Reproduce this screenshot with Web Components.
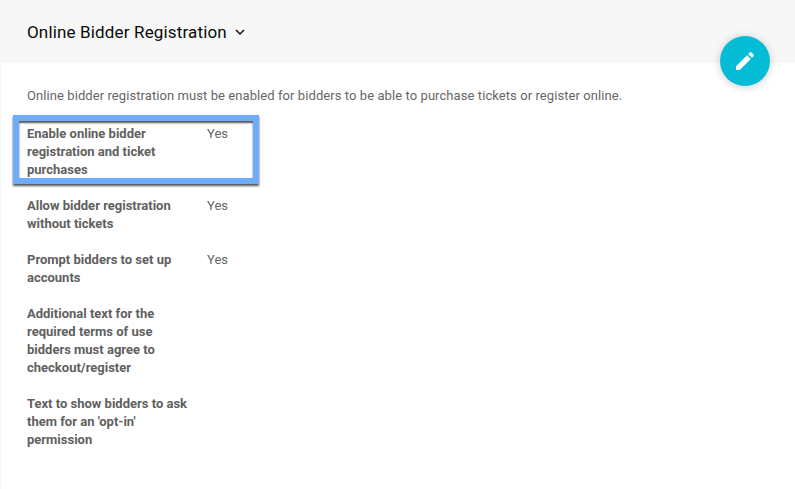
<!DOCTYPE html>
<html lang="en"><head><meta charset="utf-8"><title>Online Bidder Registration</title>
<style>body{margin:0;background:#fff;font-family:Roboto,sans-serif}</style></head><body>
<settings-card heading="Online Bidder Registration">
<edit-button slot="action"></edit-button>
<span slot="intro">Online bidder registration must be enabled for bidders to be able to purchase tickets or register online.</span>
<setting-row highlighted><span>Enable online bidder registration and ticket purchases</span><span slot="value">Yes</span></setting-row>
<setting-row><span>Allow bidder registration without tickets</span><span slot="value">Yes</span></setting-row>
<setting-row><span>Prompt bidders to set up accounts</span><span slot="value">Yes</span></setting-row>
<setting-row><span>Additional text for the required terms of use bidders must agree to checkout/register</span></setting-row>
<setting-row><span>Text to show bidders to ask them for an 'opt-in' permission</span></setting-row>
</settings-card>
<script>
class SettingsCard extends HTMLElement{
 constructor(){super();this.attachShadow({mode:'open'}).innerHTML=`<style>
 :host{display:block;box-sizing:border-box;position:relative;height:489px;border-left:1px solid #f5f5f5;overflow:hidden}
 header{box-sizing:border-box;height:63px;background:#f7f7f7;padding:1px 26px 0;display:flex;align-items:center;gap:8px}
 h1{margin:0;font-size:17px;line-height:24px;font-weight:400;color:#0a0a0a;letter-spacing:.155px}
 svg{display:block}
 main{padding:24px 26px}
 p{margin:0 0 20px;font-size:13px;line-height:18px;color:#666;white-space:nowrap;letter-spacing:.077px}
 .rows{display:grid;gap:18px}
 .action{position:absolute;right:25px;top:36px}
 </style><header><h1></h1><svg width="10" height="8" viewBox="0 0 10 8"><path d="M1 2l4 4 4-4" fill="none" stroke="#111" stroke-width="1.5"/></svg></header>
 <div class="action"><slot name="action"></slot></div><main><p><slot name="intro"></slot></p><div class="rows"><slot></slot></div></main>`;}
 connectedCallback(){this.shadowRoot.querySelector('h1').textContent=this.getAttribute('heading')}
}
class SettingRow extends HTMLElement{
 constructor(){super();this.attachShadow({mode:'open'}).innerHTML=`<style>
 :host{position:relative;display:grid;grid-template-columns:162px 1fr;column-gap:18px;font-size:13px;line-height:18px;color:#666}
 .label{font-weight:700;color:#606060}
 .frame{display:none}
 :host([highlighted]) .frame{display:block;position:absolute;box-sizing:border-box;left:-14px;top:-10px;width:246px;height:69px;border:6px solid #6eabfc;box-shadow:0 2px 2px #555,inset 0 2px 2px #555}
 </style><div class="label"><slot></slot></div><div><slot name="value"></slot></div><div class="frame"></div>`;}
}
class EditButton extends HTMLElement{
 constructor(){super();this.attachShadow({mode:'open'}).innerHTML=`<style>
 :host{display:block}button{width:50px;height:50px;padding:0;border:0;border-radius:50%;background:#04bcd6;display:grid;place-items:center;box-shadow:0 1px 9px #0003}svg{display:block}
 </style><button aria-label="Edit"><svg width="24" height="24" viewBox="0 0 24 24" fill="#fff"><path d="M3 17.25V21h3.75L17.81 9.94l-3.75-3.75L3 17.25zM20.71 7.04a1 1 0 0 0 0-1.41l-2.34-2.34a1 1 0 0 0-1.41 0l-1.83 1.83 3.75 3.75 1.83-1.83z"/></svg></button>`;}
}
customElements.define('edit-button',EditButton);
customElements.define('setting-row',SettingRow);
customElements.define('settings-card',SettingsCard);
</script></body></html>
